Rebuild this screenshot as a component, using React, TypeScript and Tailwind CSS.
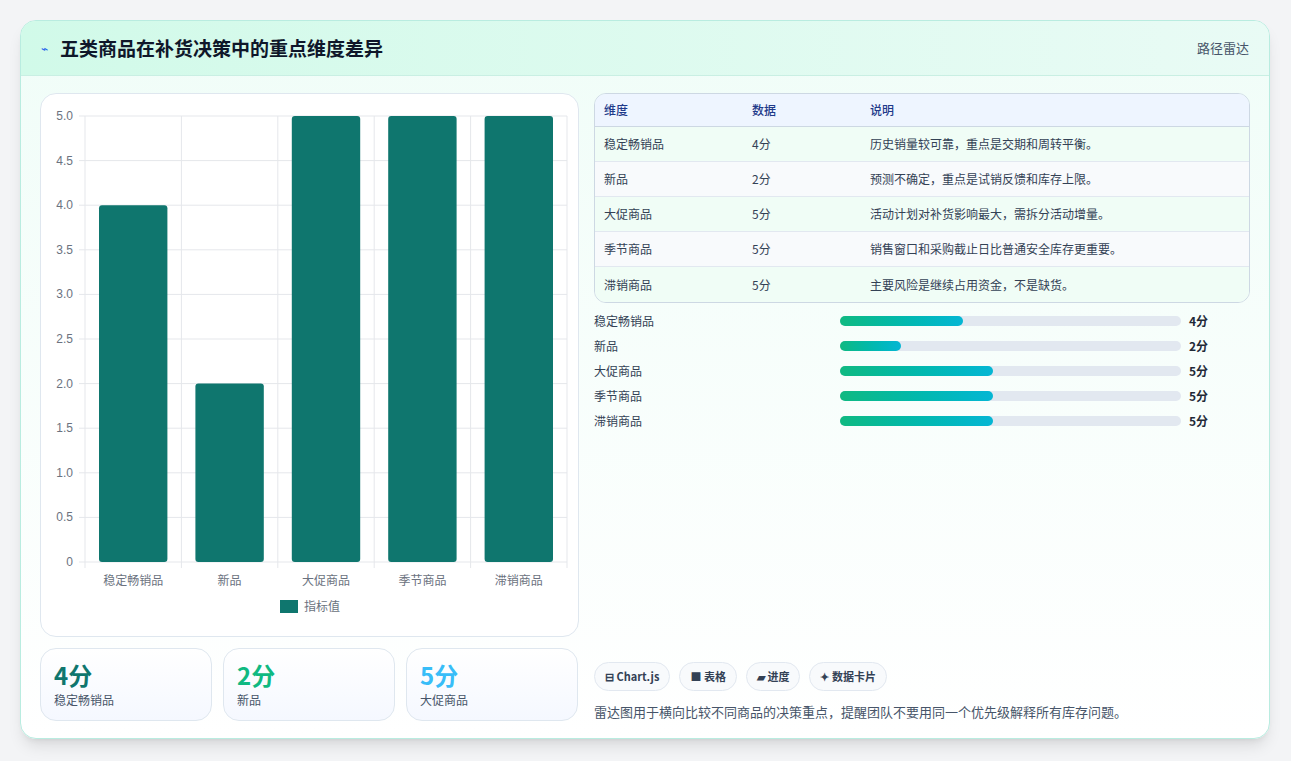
import React from "react";

const cats = ["稳定畅销品", "新品", "大促商品", "季节商品", "滞销商品"];
const vals = [4, 2, 5, 5, 5];
const desc = [
  "历史销量较可靠，重点是交期和周转平衡。",
  "预测不确定，重点是试销反馈和库存上限。",
  "活动计划对补货影响最大，需拆分活动增量。",
  "销售窗口和采购截止日比普通安全库存更重要。",
  "主要风险是继续占用资金，不是缺货。",
];
const pct = [36, 18, 45, 45, 45];

function Chart() {
  const W = 538, H = 543;
  const x0 = 44, x1 = 526, y0 = 22, y1 = 468;
  const ticks = [0, 0.5, 1, 1.5, 2, 2.5, 3, 3.5, 4, 4.5, 5];
  const cw = (x1 - x0) / 5;
  return (
    <svg width={W} height={H} className="block">
      {ticks.map((t) => {
        const y = y1 - (t / 5) * (y1 - y0);
        return (
          <g key={t}>
            <line x1={x0 - 6} x2={x1} y1={y} y2={y} stroke="#e5e7eb" />
            <text x={x0 - 12} y={y + 4} textAnchor="end" fontSize="12" fill="#6b7280" fontFamily="Liberation Sans, sans-serif">
              {t === 0 ? "0" : t.toFixed(1)}
            </text>
          </g>
        );
      })}
      {[0, 1, 2, 3, 4, 5].map((i) => (
        <line key={i} x1={x0 + i * cw} x2={x0 + i * cw} y1={y0} y2={y1 + 6} stroke="#e5e7eb" />
      ))}
      {vals.map((v, i) => {
        const h = (v / 5) * (y1 - y0);
        return (
          <rect key={i} x={x0 + i * cw + 14} y={y1 - h} width={cw - 28} height={h} rx="3" fill="#0f766e" />
        );
      })}
      {cats.map((c, i) => (
        <text key={c} x={x0 + i * cw + cw / 2} y={y1 + 23} textAnchor="middle" fontSize="12" fill="#6b7280" fontFamily="Noto Sans CJK SC, sans-serif">{c}</text>
      ))}
      <rect x={239} y={506} width={18} height={13} fill="#0f766e" />
      <text x={263} y={517} fontSize="12" fill="#6b7280" fontFamily="Noto Sans CJK SC, sans-serif">指标值</text>
    </svg>
  );
}

export default function App() {
  return (
    <div className="w-[1291px] h-[761px] bg-[#f3f4f6] pt-5 pl-5" style={{ fontFamily: '"Noto Sans CJK SC", "Noto Sans", sans-serif' }}>
      <div className="w-[1250px] h-[719px] rounded-2xl border border-[#b9ece0] bg-gradient-to-b from-[#f0fdf8] to-white shadow-lg overflow-hidden flex flex-col">
        <div className="h-[55px] flex items-center justify-between px-5 bg-gradient-to-r from-[#d1fae9] to-[#e9fbf5] border-b border-[#c9efe3]">
          <div className="flex items-center gap-3">
            <span className="text-[#2563eb] text-xs">⌁</span>
            <span className="text-[19px] font-bold text-[#0f172a]">五类商品在补货决策中的重点维度差异</span>
          </div>
          <span className="text-[13px] text-[#475569]">路径雷达</span>
        </div>
        <div className="flex gap-[15px] px-[19px] pt-[17px]">
          <div className="w-[539px] flex flex-col gap-[11px]">
            <div className="h-[544px] rounded-2xl border border-[#dfe7ef] bg-white">
              <Chart />
            </div>
            <div className="flex gap-[11px]">
              {[["4分", "稳定畅销品", "text-[#0f766e]"], ["2分", "新品", "text-[#10b981]"], ["5分", "大促商品", "text-[#38bdf8]"]].map(([a, b, c]) => (
                <div key={b} className="w-[172px] h-[73px] rounded-2xl border border-[#dfe7ef] bg-gradient-to-b from-white to-[#f5f8ff] px-[13px] pt-[10px]">
                  <div className={`text-[24px] font-bold leading-8 ${c}`}>{a}</div>
                  <div className="text-[12px] text-[#475569]">{b}</div>
                </div>
              ))}
            </div>
          </div>
          <div className="flex-1 flex flex-col">
            <div className="rounded-xl border border-[#cdd8e3] overflow-hidden text-[12px] text-[#334155]">
              <div className="flex h-[33px] items-center bg-[#eef5ff] border-b border-[#cdd8e3] text-[#1e3a8a] font-medium">
                <div className="w-[157px] pl-[9px]">维度</div>
                <div className="w-[118px]">数据</div>
                <div>说明</div>
              </div>
              {cats.map((c, i) => (
                <div key={c} className={`flex h-[35px] items-center ${i % 2 ? "bg-[#f8fafc]" : "bg-[#f0fdf6]"} ${i < 4 ? "border-b border-[#e2e8f0]" : ""}`}>
                  <div className="w-[157px] pl-[9px]">{c}</div>
                  <div className="w-[118px]">{vals[i]}分</div>
                  <div>{desc[i]}</div>
                </div>
              ))}
            </div>
            <div className="flex flex-col mt-[9px] gap-[7px] text-[12px] text-[#334155]">
              {cats.map((c, i) => (
                <div key={c} className="flex items-center h-[18px]">
                  <div className="w-[246px]">{c}</div>
                  <div className="w-[341px] h-[10px] rounded-full bg-[#e2e8f0]">
                    <div className="h-full rounded-full bg-gradient-to-r from-[#10b981] to-[#06b6d4]" style={{ width: `${pct[i]}%` }} />
                  </div>
                  <div className="ml-2 font-bold text-[#1f2937]">{vals[i]}分</div>
                </div>
              ))}
            </div>
            <div className="flex-1" />
            <div className="flex gap-[9px] text-[11px] font-bold text-[#334155] mt-[227px]">
              <span className="h-[29px] px-[10px] flex items-center rounded-full border border-[#e2e8f0] bg-[#f8fafc]">⊟ Chart.js</span>
              <span className="h-[29px] px-[10px] flex items-center rounded-full border border-[#e2e8f0] bg-[#f8fafc]">■ 表格</span>
              <span className="h-[29px] px-[10px] flex items-center rounded-full border border-[#e2e8f0] bg-[#f8fafc]">▰ 进度</span>
              <span className="h-[29px] px-[10px] flex items-center rounded-full border border-[#e2e8f0] bg-[#f8fafc]">✦ 数据卡片</span>
            </div>
            <div className="mt-[11px] text-[13px] text-[#475569]">雷达图用于横向比较不同商品的决策重点，提醒团队不要用同一个优先级解释所有库存问题。</div>
          </div>
        </div>
      </div>
    </div>
  );
}
